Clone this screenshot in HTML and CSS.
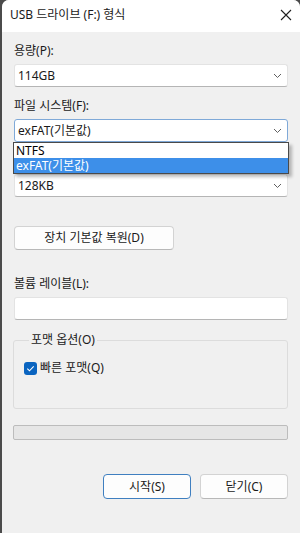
FILE: index.html
```html
<!DOCTYPE html>
<html lang="ko">
<head>
<meta charset="utf-8">
<link rel="stylesheet" href="styles.css">
</head>
<body>
<div class="window">
  <div class="titlebar">
    <span class="title">USB 드라이브 (F:) 형식</span>
    <svg class="close" width="12" height="12" viewBox="0 0 12 12"><path d="M1 1 L11 11 M11 1 L1 11" stroke="#1f1f1f" stroke-width="1.1" fill="none"/></svg>
  </div>
  <div class="content">
    <div class="label">용량(P):</div>
    <div class="combo">
      <span>114GB</span>
      <svg class="chev" width="9" height="6" viewBox="0 0 9 6"><path d="M1 1 L4.5 4.5 L8 1" stroke="#5f5f5f" stroke-width="1" fill="none"/></svg>
    </div>

    <div class="label gap">파일 시스템(F):</div>
    <div class="combo focus">
      <span>exFAT(기본값)</span>
      <svg class="chev" width="9" height="6" viewBox="0 0 9 6"><path d="M1 1 L4.5 4.5 L8 1" stroke="#5f5f5f" stroke-width="1" fill="none"/></svg>
      <div class="dropdown">
        <div class="opt">NTFS</div>
        <div class="opt sel">exFAT(기본값)</div>
      </div>
    </div>

    <div class="label gap"></div>
    <div class="combo">
      <span>128KB</span>
      <svg class="chev" width="9" height="6" viewBox="0 0 9 6"><path d="M1 1 L4.5 4.5 L8 1" stroke="#5f5f5f" stroke-width="1" fill="none"/></svg>
    </div>

    <div class="btn restore">장치 기본값 복원(D)</div>

    <div class="label vol">볼륨 레이블(L):</div>
    <div class="input"></div>

    <fieldset class="group">
      <legend>포맷 옵션(O)</legend>
      <div class="check-row">
        <span class="checkbox"><svg width="13" height="13" viewBox="0 0 13 13"><path d="M3.3 6.7 L5.5 8.8 L9.7 4.4" stroke="#ffffff" stroke-width="1.1" fill="none"/></svg></span>
        <span>빠른 포맷(Q)</span>
      </div>
    </fieldset>

    <div class="progress"></div>

    <div class="actions">
      <div class="btn primary">시작(S)</div>
      <div class="btn">닫기(C)</div>
    </div>
  </div>
</div>
</body>
</html>
```

FILE: styles.css
```css
html, body {
  margin: 0;
  padding: 0;
}
body {
  width: 300px;
  height: 533px;
  background: #4b4b4b;
  font-family: "Noto Sans", "Noto Sans CJK KR", sans-serif;
  font-size: 12px;
  color: #1a1a1a;
  overflow: hidden;
}
.window {
  margin-left: 2px;
  height: 533px;
  background: #f0f0f0;
  border-radius: 7px 7px 0 0;
  overflow: hidden;
}
.titlebar {
  height: 32px;
  background: #ffffff;
  display: flex;
  align-items: center;
  justify-content: space-between;
  padding: 0 8px 2px 8px;
  box-sizing: border-box;
}
.title {
  font-size: 12px;
  line-height: 16px;
  color: #1a1a1a;
}
.content {
  padding: 11px 12px 0 12px;
}
.label {
  line-height: 16px;
  height: 16px;
  margin-bottom: 5px;
  white-space: nowrap;
}
.label.gap {
  margin-top: 11px;
}
.combo {
  position: relative;
  height: 23px;
  box-sizing: border-box;
  background: #ffffff;
  border: 1px solid #e3e3e3;
  border-bottom-color: #b5b5b5;
  border-radius: 3px;
  display: flex;
  align-items: center;
  justify-content: space-between;
  padding: 0 5px 0 3px;
  line-height: 16px;
}
.combo.focus {
  border-color: #7fa9d8;
}
.chev {
  display: block;
}
.dropdown {
  position: absolute;
  top: 22px;
  left: -2px;
  width: 276px;
  box-sizing: border-box;
  background: #ffffff;
  border: 1px solid #4a4a4a;
  box-shadow: 3px 3px 3px rgba(0, 0, 0, 0.25);
  z-index: 5;
}
.opt {
  height: 15px;
  line-height: 15px;
  padding-left: 2px;
  color: #000000;
  white-space: nowrap;
}
.opt.sel {
  background: #3d8fe9;
  color: #ffffff;
}
.btn {
  height: 24px;
  box-sizing: border-box;
  background: #fdfdfd;
  border: 1px solid #d3d3d3;
  border-bottom-color: #b8b8b8;
  border-radius: 4px;
  display: flex;
  align-items: center;
  justify-content: center;
  line-height: 16px;
  white-space: nowrap;
}
.btn.restore {
  width: 160px;
  margin-top: 29px;
}
.label.vol {
  margin-top: 26px;
}
.input {
  height: 23px;
  box-sizing: border-box;
  background: #ffffff;
  border: 1px solid #e3e3e3;
  border-bottom-color: #b5b5b5;
  border-radius: 3px;
}
.group {
  margin: 12px 0 0 -1px;
  border: 1px solid #dcdcdc;
  border-radius: 3px;
  padding: 12px 10px 32px 10px;
  min-width: 0;
}
.group legend {
  padding: 0 2px;
  margin-left: 5px;
  line-height: 16px;
}
.check-row {
  display: flex;
  align-items: center;
  gap: 3px;
  line-height: 16px;
}
.checkbox {
  width: 13px;
  height: 13px;
  border-radius: 3px;
  background: #0a64c0;
  display: block;
}
.checkbox svg {
  display: block;
}
.progress {
  margin: 16px 0 0 -1px;
  height: 15px;
  box-sizing: border-box;
  background: #e6e6e6;
  border: 1px solid #bcbcbc;
  border-radius: 2px;
}
.actions {
  margin-top: 34px;
  display: flex;
  justify-content: flex-end;
  gap: 9px;
}
.actions .btn {
  width: 88px;
  height: 25px;
}
.btn.primary {
  border-color: #3f7fc0;
}
```
